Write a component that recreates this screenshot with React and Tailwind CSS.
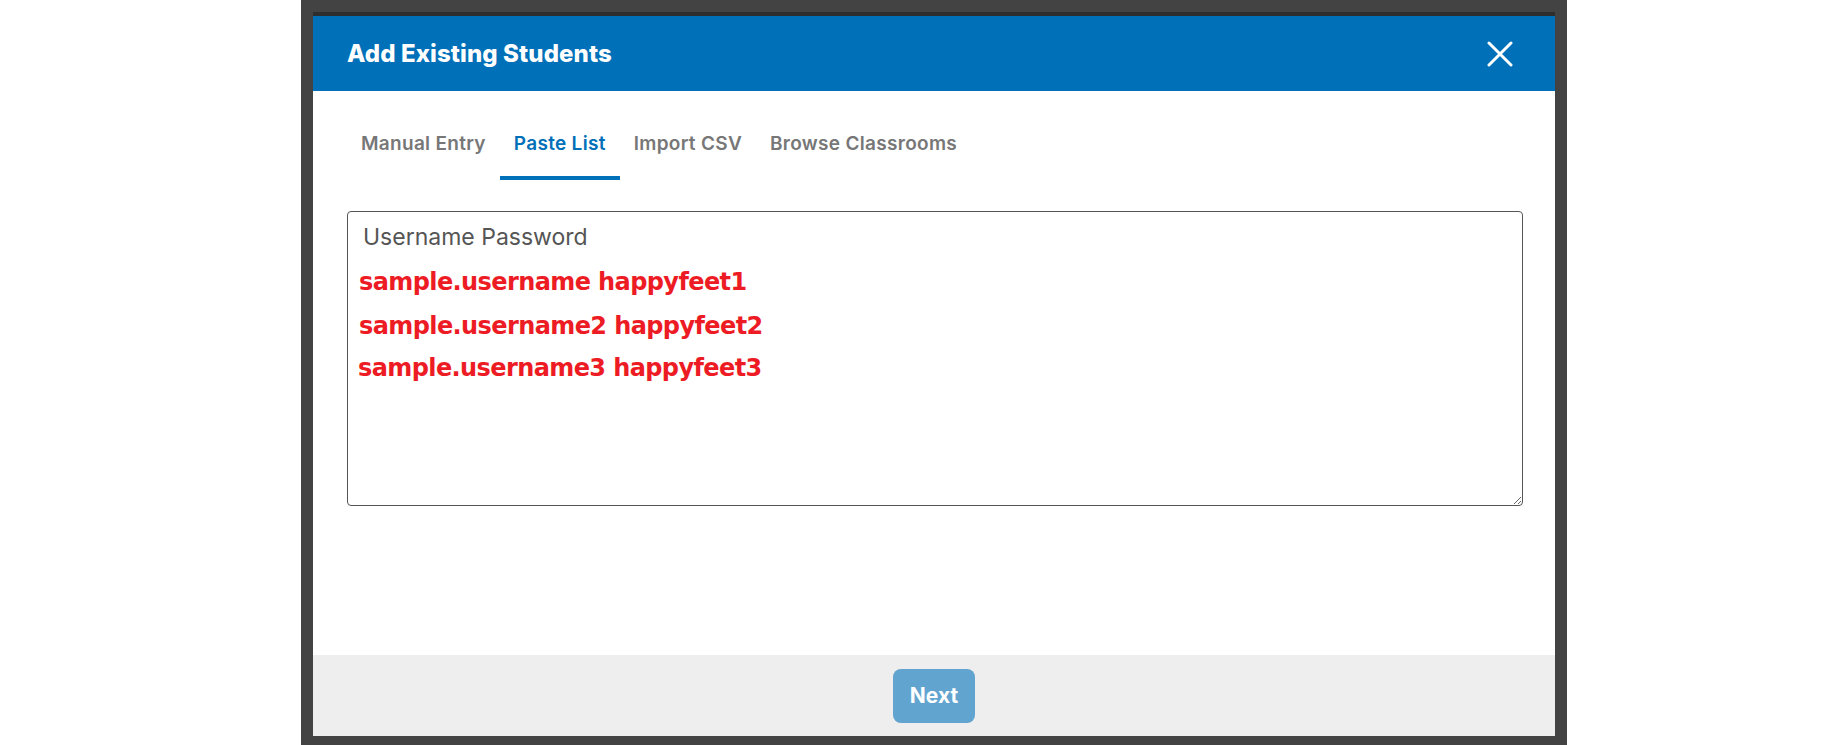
import { useState } from 'react'

const TABS = ['Manual Entry', 'Paste List', 'Import CSV', 'Browse Classrooms']

const SAMPLE_ROWS = [
  'sample.username happyfeet1',
  'sample.username2 happyfeet2',
  'sample.username3 happyfeet3',
]

function CloseIcon() {
  return (
    <svg width="26" height="26" viewBox="0 0 26 26" fill="none">
      <path d="M2 2 L24 24 M24 2 L2 24" stroke="white" strokeWidth="3" strokeLinecap="round" />
    </svg>
  )
}

export default function App() {
  const [activeTab, setActiveTab] = useState('Paste List')
  const [list, setList] = useState('')

  return (
    <div className="flex h-[745px] w-full bg-white font-['Inter','Open_Sans',sans-serif]">
      {/* page behind the overlay */}
      <div className="w-[301px] shrink-0" />

      {/* dark backdrop around the dialog */}
      <div className="flex w-[1266px] shrink-0 bg-[#434343] px-3 pb-[9px] pt-3">
        <div className="flex w-full flex-col border-t-4 border-[#2e2e2e] bg-white">

          {/* ── Header ── */}
          <header className="flex h-[75px] shrink-0 items-center justify-between bg-[#0070b8] pl-[34px] pr-[42px]">
            <h1 className="text-[24px] font-extrabold leading-none tracking-[0.1px] text-white">
              Add Existing Students
            </h1>
            <button className="flex h-[26px] w-[26px] items-center justify-center">
              <CloseIcon />
            </button>
          </header>

          {/* ── Body ── */}
          <div className="flex flex-1 flex-col pl-[34px] pr-[32px]">
            <nav className="flex">
              {TABS.map((tab) => (
                <button
                  key={tab}
                  onClick={() => setActiveTab(tab)}
                  className={`border-b-4 px-[14px] pb-[20px] pt-[41px] text-[19px] font-semibold leading-[24px] tracking-[0.3px] ${
                    activeTab === tab
                      ? 'border-[#0070b8] text-[#0070b8]'
                      : 'border-transparent text-[#777777]'
                  }`}
                >
                  {tab}
                </button>
              ))}
            </nav>

            <div className="relative mt-[31px] h-[295px]">
              <textarea
                value={list}
                onChange={(e) => setList(e.target.value)}
                placeholder="Username Password"
                className="block h-full w-full resize rounded-[4px] border border-[#555555] px-[15px] pt-[10px] text-[23px] leading-[30px] text-[#333] outline-none placeholder:text-[#555555]"
              />
              {/* example rows shown on top of the empty field */}
              {!list && (
                <div className="pointer-events-none absolute left-[12px] top-[51px] flex flex-col font-['DejaVu_Sans',sans-serif] text-[24px] font-bold leading-[41px] tracking-[-0.6px] text-[#ed1c24]">
                  <span>{SAMPLE_ROWS[0]}</span>
                  <span className="mt-[3px]">{SAMPLE_ROWS[1]}</span>
                  <span className="-ml-px mt-px">{SAMPLE_ROWS[2]}</span>
                </div>
              )}
            </div>
          </div>

          {/* ── Footer ── */}
          <footer className="flex h-[81px] shrink-0 items-center justify-center bg-[#eeeeee]">
            <button className="h-[54px] w-[82px] rounded-[8px] bg-[#62a4d0] text-[21px] font-bold text-white">
              Next
            </button>
          </footer>
        </div>
      </div>
    </div>
  )
}
